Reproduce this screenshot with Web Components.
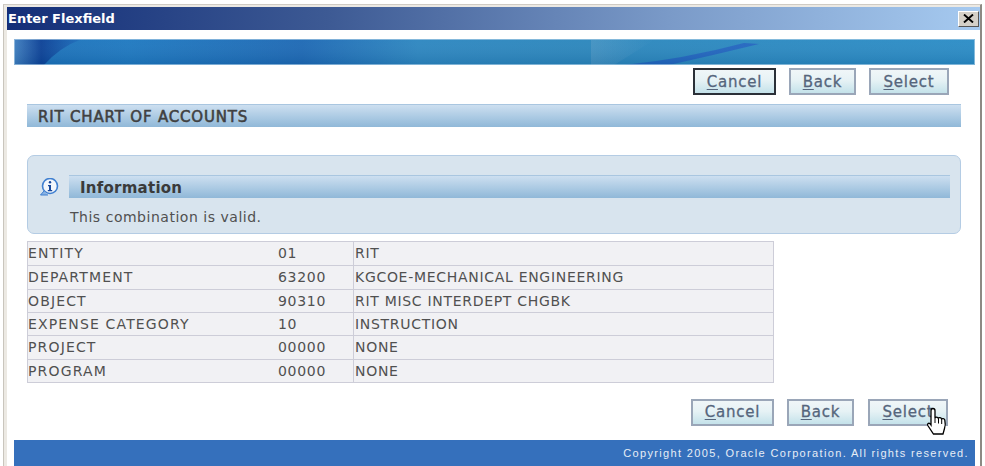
<!DOCTYPE html>
<html>
<head>
<meta charset="utf-8">
<title>Enter Flexfield</title>
<style>
    html, body { margin: 0; height: 100%; background: #fff; overflow: hidden; }
    body { font-family: "DejaVu Sans", sans-serif; }
</style>
</head>
<body>
<flex-window>
    <title-bar slot="title">Enter Flexfield</title-bar>
    <oa-banner></oa-banner>
    <button-row style="padding: 3px 26px 0 0; --gap: 13px">
        <oa-button focused accesskey="C" rest="ancel" width="83"></oa-button>
        <oa-button accesskey="B" rest="ack" width="67"></oa-button>
        <oa-button accesskey="S" rest="elect" width="80"></oa-button>
    </button-row>
    <section-header>RIT CHART OF ACCOUNTS</section-header>
    <info-message heading="Information">This combination is valid.</info-message>
    <kv-table>
        <kv-row name="ENTITY" code="01" desc="RIT"></kv-row>
        <kv-row name="DEPARTMENT" code="63200" desc="KGCOE-MECHANICAL ENGINEERING"></kv-row>
        <kv-row name="OBJECT" code="90310" desc="RIT MISC INTERDEPT CHGBK"></kv-row>
        <kv-row name="EXPENSE CATEGORY" code="10" desc="INSTRUCTION"></kv-row>
        <kv-row name="PROJECT" code="00000" desc="NONE"></kv-row>
        <kv-row name="PROGRAM" code="00000" desc="NONE"></kv-row>
    </kv-table>
    <button-row style="padding: 16px 27px 0 0; --gap: 13px">
        <oa-button accesskey="C" rest="ancel" width="83"></oa-button>
        <oa-button accesskey="B" rest="ack" width="67" style="margin-right: 1px"></oa-button>
        <oa-button accesskey="S" rest="elect" width="80" hand></oa-button>
    </button-row>
    <oa-footer>Copyright 2005, Oracle Corporation. All rights reserved.</oa-footer>
</flex-window>

<script>
class FlexWindow extends HTMLElement {
    constructor() {
        super();
        this.attachShadow({ mode: 'open' }).innerHTML = `
            <style>
                :host {
                    display: block;
                    box-sizing: border-box;
                    margin: 4px 0 0 3px;
                    width: 979px;
                    height: 462px;
                    border-top: 1px solid #cfcbc4;
                    border-left: 1px solid #c9c5bd;
                    border-right: 2px solid #8d8a84;
                    background: #fff;
                    box-shadow: inset 3px 2px 0 #ece9e3;
                    overflow: hidden;
                    color: #3c3c3c;
                }
                .head { padding: 2px 0 0 3px; }
                .body { display: flex; flex-direction: column; height: 433px; padding: 0 0 0 10px; }
            </style>
            <div class="head"><slot name="title"></slot></div>
            <div class="body"><slot></slot></div>
        `;
    }
}
customElements.define('flex-window', FlexWindow);

class TitleBar extends HTMLElement {
    constructor() {
        super();
        this.attachShadow({ mode: 'open' }).innerHTML = `
            <style>
                :host {
                    display: flex;
                    align-items: center;
                    justify-content: space-between;
                    height: 23px;
                    padding: 0 1px 0 1px;
                    background: linear-gradient(90deg, #132e78 0%, #3d5a94 33%, #7a9ac8 68%, #a6caf0 100%);
                    color: #fff;
                    font: bold 13px "DejaVu Sans", sans-serif;
                    letter-spacing: 0;
                }
                .close {
                    display: flex;
                    width: 21px;
                    height: 16px;
                    background: #d4d0c8;
                    border: 1px solid;
                    border-color: #fff #555 #555 #fff;
                    box-sizing: border-box;
                    align-items: center;
                    justify-content: center;
                }
            </style>
            <span><slot></slot></span>
            <span class="close"><svg width="11" height="9" viewBox="0 0 11 9"><path d="M1 .5 10 8.500M10 .5 1 8.500" stroke="#000" stroke-width="1.900" fill="none"/></svg></span>
        `;
    }
}
customElements.define('title-bar', TitleBar);

class OaBanner extends HTMLElement {
    constructor() {
        super();
        this.attachShadow({ mode: 'open' }).innerHTML = `
            <style>
                :host { display: block; margin-top: 9px; width: 961px; height: 26px; flex: none; }
                svg { display: block; }
            </style>
            <svg width="961" height="26" viewBox="0 0 961 26" preserveAspectRatio="none">
                <defs>
                    <linearGradient id="b" x1="0" x2="1" y1="0" y2="0">
                        <stop offset="0" stop-color="#1a6fb8"/>
                        <stop offset=".12" stop-color="#1d78c0"/>
                        <stop offset=".3" stop-color="#1c68b4"/>
                        <stop offset=".42" stop-color="#2c86c0"/>
                        <stop offset=".6" stop-color="#2a86bc"/>
                        <stop offset="1" stop-color="#2a8cc6"/>
                    </linearGradient>
                    <linearGradient id="v" x1="0" x2="0" y1="0" y2="1">
                        <stop offset="0" stop-color="#fff" stop-opacity=".04"/>
                        <stop offset="1" stop-color="#003060" stop-opacity=".14"/>
                    </linearGradient>
                    <linearGradient id="s" x1="0" x2="1" y1="0" y2="0">
                        <stop offset="0" stop-color="#3f7fc0"/>
                        <stop offset=".4" stop-color="#0a4096"/>
                        <stop offset="1" stop-color="#1a6ebc"/>
                    </linearGradient>
                    <linearGradient id="p" x1="0" x2="1" y1="0" y2="0">
                        <stop offset="0" stop-color="#6aa6cc" stop-opacity=".35"/>
                        <stop offset="1" stop-color="#6aa6cc" stop-opacity="0"/>
                    </linearGradient>
                </defs>
                <rect width="961" height="26" fill="url(#b)"/>
                <path d="M0 0H68Q46 8 30 26H0Z" fill="url(#s)"/>
                <path d="M577 1H640L600 26H577Z" fill="url(#p)"/>
                <path d="M610 26Q670 20 730 4L745 5Q700 16 655 26Z" fill="#1c4fc0" opacity=".6"/>
                <rect width="961" height="26" fill="url(#v)"/>
                <rect x=".5" y=".5" width="960" height="25" fill="none" stroke="#bcd8ec" stroke-opacity=".6"/>
            </svg>
        `;
    }
}
customElements.define('oa-banner', OaBanner);

class ButtonRow extends HTMLElement {
    constructor() {
        super();
        this.attachShadow({ mode: 'open' }).innerHTML = `
            <style>
                :host {
                    display: flex;
                    justify-content: flex-end;
                    gap: var(--gap, 13px);
                    width: 961px;
                    box-sizing: border-box;
                    flex: none;
                }
            </style>
            <slot></slot>
        `;
    }
}
customElements.define('button-row', ButtonRow);

class OaButton extends HTMLElement {
    connectedCallback() {
        const key = this.getAttribute('accesskey');
        const rest = this.getAttribute('rest');
        const focused = this.hasAttribute('focused');
        const hand = this.hasAttribute('hand');
        this.attachShadow({ mode: 'open' }).innerHTML = `
            <style>
                :host {
                    display: flex;
                    position: relative;
                    box-sizing: border-box;
                    width: ${this.getAttribute('width')}px;
                    height: 27px;
                    align-items: center;
                    justify-content: center;
                    border: ${focused ? '2px solid #2b3038' : '2px solid #9aa6b8'};
                    background: linear-gradient(#f0f6f8, #e6f2f5 45%, #c4e2ea);
                    color: #55657c;
                    font: 15px "DejaVu Sans", sans-serif;
                    -webkit-text-stroke: .3px #55657c;
                    letter-spacing: .8px;
                }
                u { text-underline-offset: 2px; }
                svg { position: absolute; right: -4px; top: 6px; }
            </style>
            <span><u>${key}</u>${rest}</span>
            ${hand ? `<svg width="24" height="31" viewBox="0 0 24 31">
                <path d="M7 1.500c1.300 0 2 .9 2 2.200V11c.3-1 2.800-1.300 3.300.3.500-.9 2.900-.9 3.200.6.700-.6 3-.3 3.300 1.100.6 2.600.4 6.500-.3 8.500L17 27H7.500L1.800 18.500c-.9-1.600.9-3 2.200-1.800L5 18V3.700C5 2.400 5.800 1.500 7 1.500Z" fill="#fff" stroke="#000" stroke-width="1.300"/>
                <path d="M9 11v5M12.500 11.500v5M15.700 12v5" stroke="#000" stroke-width="1" fill="none"/>
            </svg>` : ''}
        `;
    }
}
customElements.define('oa-button', OaButton);

class SectionHeader extends HTMLElement {
    constructor() {
        super();
        this.attachShadow({ mode: 'open' }).innerHTML = `
            <style>
                :host {
                    display: flex;
                    align-items: center;
                    box-sizing: border-box;
                    flex: none;
                    margin: 9px 0 0 13px;
                    width: 934px;
                    height: 23px;
                    padding: 1px 0 0 11px;
                    border-top: 1px solid #a9c6e0;
                    background: linear-gradient(#cddff0, #a8c8e2 60%, #90b8d8);
                    color: #404040;
                    font: 15px "DejaVu Sans", sans-serif;
                    -webkit-text-stroke: .55px #404040;
                    letter-spacing: .82px;
                }
            </style>
            <slot></slot>
        `;
    }
}
customElements.define('section-header', SectionHeader);

class InfoMessage extends HTMLElement {
    connectedCallback() {
        this.attachShadow({ mode: 'open' }).innerHTML = `
            <style>
                :host {
                    display: block;
                    box-sizing: border-box;
                    flex: none;
                    margin: 28px 0 0 13px;
                    width: 934px;
                    height: 79px;
                    padding: 19px 10px 0 11px;
                    background: #d8e4ee;
                    border: 1px solid #b4cce4;
                    border-radius: 7px;
                }
                .row { display: flex; align-items: center; gap: 9px; height: 23px; }
                .bar {
                    flex: 1;
                    height: 100%;
                    box-sizing: border-box;
                    padding-left: 11px;
                    border-top: 1px solid #a9c6e0;
                    background: linear-gradient(#cddff0, #a8c8e2 60%, #90b8d8);
                    color: #3a3a3a;
                    font: bold 15px/24px "DejaVu Sans", sans-serif;
                    letter-spacing: .25px;
                }
                .text {
                    padding: 11px 0 0 31px;
                    color: #505050;
                    font: 14px "DejaVu Sans", sans-serif;
                    letter-spacing: .52px;
                }
                svg { flex: none; }
            </style>
            <div class="row">
                <svg width="21" height="18" viewBox="0 0 21 18">
                    <circle cx="11" cy="8" r="7.500" fill="#f2f6fb" stroke="#3f7fd0" stroke-width="1.600"/>
                    <path d="M5 13 1.500 17H9" fill="#8ab4e4" stroke="#3f7fd0"/>
                    <circle cx="11" cy="4.300" r="1.200" fill="#17479a"/>
                    <path d="M9 7h3v5h1.200v1.200H8.800V12H10V8.200H9Z" fill="#17479a"/>
                </svg>
                <div class="bar">${this.getAttribute('heading')}</div>
            </div>
            <div class="text"><slot></slot></div>
        `;
    }
}
customElements.define('info-message', InfoMessage);

class KvTable extends HTMLElement {
    constructor() {
        super();
        this.attachShadow({ mode: 'open' }).innerHTML = `
            <style>
                :host {
                    display: block;
                    box-sizing: border-box;
                    flex: none;
                    margin: 7px 0 0 13px;
                    width: 747px;
                    border: 1px solid #cdcdd8;
                    background: #f1f1f4;
                }
            </style>
            <slot></slot>
        `;
    }
}
customElements.define('kv-table', KvTable);

class KvRow extends HTMLElement {
    connectedCallback() {
        this.attachShadow({ mode: 'open' }).innerHTML = `
            <style>
                :host {
                    display: grid;
                    grid-template-columns: 326px 1fr;
                    height: 23.340px;
                    box-sizing: border-box;
                    border-top: 1px solid #cdcdd8;
                    color: #505050;
                    font: 14px/22px "DejaVu Sans", sans-serif;
                    letter-spacing: .7px;
                }
                :host(:first-child) { border-top: 0; }
                .left { display: grid; grid-template-columns: 250px 1fr; border-right: 1px solid #cdcdd8; }
                .name { letter-spacing: 1.150px; }
                .desc { padding-left: 1px; }
            </style>
            <div class="left"><span class="name">${this.getAttribute('name')}</span><span>${this.getAttribute('code')}</span></div>
            <div class="desc">${this.getAttribute('desc')}</div>
        `;
    }
}
customElements.define('kv-row', KvRow);

class OaFooter extends HTMLElement {
    constructor() {
        super();
        this.attachShadow({ mode: 'open' }).innerHTML = `
            <style>
                :host {
                    display: flex;
                    align-items: center;
                    justify-content: flex-end;
                    box-sizing: border-box;
                    flex: none;
                    margin-top: 14px;
                    width: 961px;
                    height: 26px;
                    padding-right: 6px;
                    background: #3570bc;
                    color: #e6edf6;
                    font: 11px "Liberation Sans", sans-serif;
                    letter-spacing: 1.350px;
                }
            </style>
            <slot></slot>
        `;
    }
}
customElements.define('oa-footer', OaFooter);
</script>
</body>
</html>
